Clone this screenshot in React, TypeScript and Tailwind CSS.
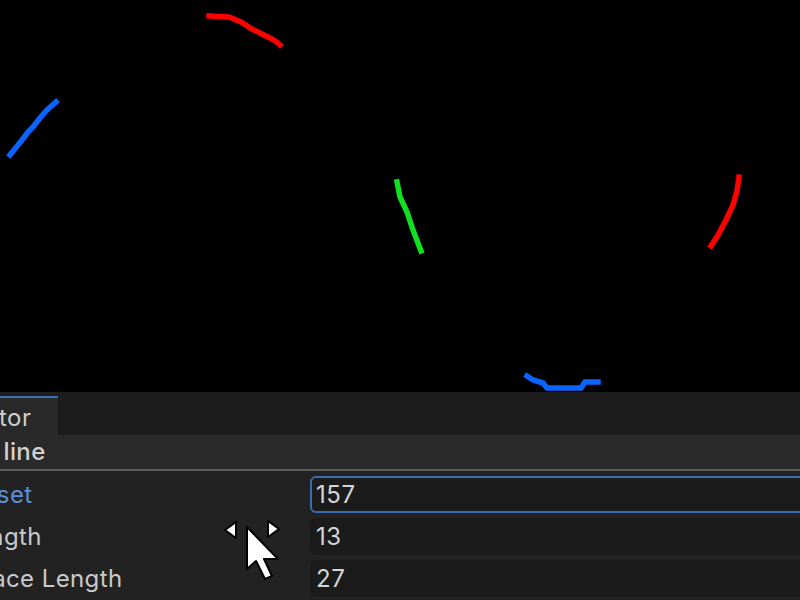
import React from 'react'

const font = { fontFamily: 'Inter, "Noto Sans", sans-serif' }

// Pixel-ish strokes on the preview canvas
function Strokes() {
  return (
    <svg className="absolute inset-0" width={800} height={392} viewBox="0 0 800 392">
      <g fill="none" strokeWidth={5.5} strokeLinecap="square" strokeLinejoin="miter">
        <polyline stroke="#ff0000" points="209,16 229,17 241,22 252,29 264,35 274,40 280,45" />
        <polyline stroke="#0a64ff" points="10,155 22,140 28,132 33,127 40,118 47,110 56,102" />
        <polyline stroke="#10e020" points="397,182 400,197 407,212 413,230 421,251" />
        <polyline stroke="#ff0000" points="739,177 737,191 733,205 726,220 718,235 711,246" />
        <polyline stroke="#0a64ff" points="527,376 533,380 543,383 547,388 581,388 585,382 598,382" />
      </g>
    </svg>
  )
}

function ResizeCursor() {
  return (
    <svg
      className="absolute left-[222px] top-[518px]"
      width={62}
      height={66}
      viewBox="0 0 62 66"
    >
      <g stroke="#000" strokeWidth={2} strokeLinejoin="round" fill="#fff">
        <polygon points="3,12 14,4 14,20" />
        <polygon points="57,11 46,3 46,19" />
        <polygon points="25,9 25,51 34,43 43,61 50,58 42,41 56,41" />
      </g>
    </svg>
  )
}

interface FieldRowProps {
  label: string
  value: string
  active?: boolean
}

function FieldRow({ label, value, active }: FieldRowProps) {
  return (
    <div className="flex h-[37px] items-center">
      <div
        className={`ml-[-39px] w-[349px] whitespace-nowrap text-[24px] tracking-[0.4px] ${
          active ? 'text-[#5c8fd6]' : 'text-[#c9c9c9]'
        }`}
      >
        {label}
      </div>
      <div
        className={`mr-[-12px] flex h-full flex-1 items-center rounded-[6px] bg-[#1b1b1c] pl-[4px] text-[24px] tracking-[0.6px] text-[#d4d4d4] ${
          active ? 'border-2 border-[#3b6cb2]' : 'border-2 border-[#1b1b1c]'
        }`}
      >
        {value}
      </div>
    </div>
  )
}

export default function App() {
  return (
    <div className="relative flex h-[600px] w-[800px] flex-col overflow-hidden bg-black" style={font}>
      <div className="relative h-[392px] shrink-0 bg-black">
        <Strokes />
      </div>

      {/* tab strip */}
      <div className="flex h-[43px] shrink-0 items-end bg-[#1c1c1d]">
        <div className="flex h-[39px] w-[58px] items-center border-t-2 border-[#3d6db0] bg-[#29292a] pt-[3px]">
          <span className="ml-[-79px] whitespace-nowrap text-[24px] tracking-[0.4px] text-[#cfcfcf]">Inspector</span>
        </div>
      </div>

      {/* section header */}
      <div className="flex h-[34px] shrink-0 items-center bg-[#2a2a2b]">
        <span className="ml-[-93px] whitespace-nowrap text-[24px] font-medium tracking-[0.4px] text-[#d2d2d2]">Dashed line</span>
      </div>
      <div className="h-[2px] shrink-0 bg-[#5a5a5a]" />

      <div className="flex flex-1 flex-col gap-[5px] bg-[#222223] pt-[5px]">
        <FieldRow label="Offset" value="157" active />
        <FieldRow label="Length" value="13" />
        <FieldRow label="Space Length" value="27" />
      </div>

      <ResizeCursor />
    </div>
  )
}
